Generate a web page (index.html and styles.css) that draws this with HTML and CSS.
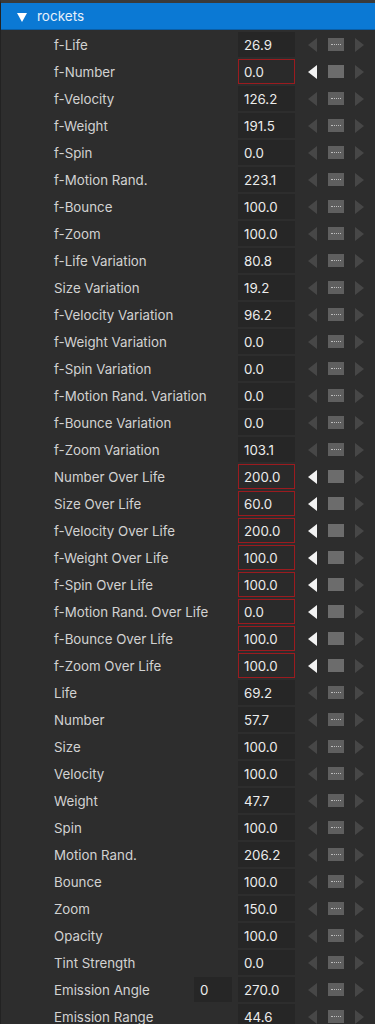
FILE: index.html
```html
<!DOCTYPE html>
<html lang="en">
<head>
    <meta charset="UTF-8">
    <meta name="viewport" content="width=device-width, initial-scale=1.0">
    <title>rockets</title>
    <link rel="stylesheet" href="styles.css">
</head>
<body>
    <div class="panel">
        <div class="group-header">
            <span class="caret"></span>
            <span class="group-name">rockets</span>
        </div>
        <div class="rows" id="rows"></div>
    </div>

    <script>
        // [label, value, keyed, extra field]
        const params = [
            ['f-Life', '26.9'],
            ['f-Number', '0.0', true],
            ['f-Velocity', '126.2'],
            ['f-Weight', '191.5'],
            ['f-Spin', '0.0'],
            ['f-Motion Rand.', '223.1'],
            ['f-Bounce', '100.0'],
            ['f-Zoom', '100.0'],
            ['f-Life Variation', '80.8'],
            ['Size Variation', '19.2'],
            ['f-Velocity Variation', '96.2'],
            ['f-Weight Variation', '0.0'],
            ['f-Spin Variation', '0.0'],
            ['f-Motion Rand. Variation', '0.0'],
            ['f-Bounce Variation', '0.0'],
            ['f-Zoom Variation', '103.1'],
            ['Number Over Life', '200.0', true],
            ['Size Over Life', '60.0', true],
            ['f-Velocity Over Life', '200.0', true],
            ['f-Weight Over Life', '100.0', true],
            ['f-Spin Over Life', '100.0', true],
            ['f-Motion Rand. Over Life', '0.0', true],
            ['f-Bounce Over Life', '100.0', true],
            ['f-Zoom Over Life', '100.0', true],
            ['Life', '69.2'],
            ['Number', '57.7'],
            ['Size', '100.0'],
            ['Velocity', '100.0'],
            ['Weight', '47.7'],
            ['Spin', '100.0'],
            ['Motion Rand.', '206.2'],
            ['Bounce', '100.0'],
            ['Zoom', '150.0'],
            ['Opacity', '100.0'],
            ['Tint Strength', '0.0'],
            ['Emission Angle', '270.0', false, '0'],
            ['Emission Range', '44.6']
        ];

        const rows = document.getElementById('rows');
        params.forEach(([label, value, keyed, extra]) => {
            const row = document.createElement('div');
            row.className = 'row' + (keyed ? ' keyed' : '');
            row.innerHTML = `
                <span class="label">${label}</span>
                ${extra !== undefined ? `<span class="extra">${extra}</span>` : ''}
                <span class="value">${value}</span>
                <span class="keys">
                    <span class="arrow left"></span>
                    <span class="key"><span class="dots"></span></span>
                    <span class="arrow right"></span>
                </span>`;
            rows.appendChild(row);
        });
    </script>
</body>
</html>
```

FILE: styles.css
```css
* {
    box-sizing: border-box;
}

:root {
    --bg: #2d2d2d;
    --field-bg: #262626;
    --blue: #0b79d4;
    --label: #d2d2d2;
    --value: #ececec;
    --dim: #474747;
    --keyed: #9b1b1f;
}

body {
    margin: 0;
    background: var(--bg);
    font-family: Inter, 'Noto Sans', sans-serif;
    font-size: 13.3px;
    color: var(--label);
}

.panel {
    border-top: 3px solid #3a3a3a;
    border-left: 1px solid #222;
    min-height: 100vh;
}

.group-header {
    height: 27px;
    background: var(--blue);
    border-bottom: 1px solid #0a5ea6;
    display: flex;
    align-items: center;
    padding-left: 16px;
    color: #e6f0fa;
    font-size: 13.5px;
}

.caret {
    width: 0;
    height: 0;
    border-left: 5px solid transparent;
    border-right: 5px solid transparent;
    border-top: 9px solid #fff;
    margin-right: 10px;
    margin-top: 2px;
}

.rows {
    display: flex;
    flex-direction: column;
    padding-top: 1px;
}

.row {
    height: 27px;
    display: flex;
    align-items: center;
    padding-left: 53px;
}

.label {
    flex: 1;
    white-space: nowrap;
}

.extra,
.value {
    height: 25px;
    display: flex;
    align-items: center;
    background: var(--field-bg);
    color: var(--value);
    padding-left: 5px;
}

.extra {
    width: 38px;
    margin-right: 6px;
    padding-left: 6px;
}

.value {
    width: 57px;
    margin-right: 8px;
    border: 1px solid transparent;
}

.keyed .value {
    border-color: var(--keyed);
    background: #2a2a2a;
}

.keys {
    display: flex;
    align-items: center;
    width: 72px;
}

.arrow {
    width: 0;
    height: 0;
    border-top: 7px solid transparent;
    border-bottom: 7px solid transparent;
}

.arrow.left {
    border-right: 9px solid var(--dim);
    margin-left: 5px;
}

.keyed .arrow.left {
    border-right-color: #f2f2f2;
}

.arrow.right {
    border-left: 9px solid var(--dim);
    margin-left: 11px;
}

.key {
    width: 16px;
    height: 13px;
    margin-left: 11px;
    background: #5f5f5f;
    display: flex;
    align-items: center;
    justify-content: center;
}

.dots {
    width: 10px;
    border-top: 1px dotted #bdbdbd;
}

.keyed .key {
    background: #6c6c6c;
}

.keyed .dots {
    display: none;
}
```
